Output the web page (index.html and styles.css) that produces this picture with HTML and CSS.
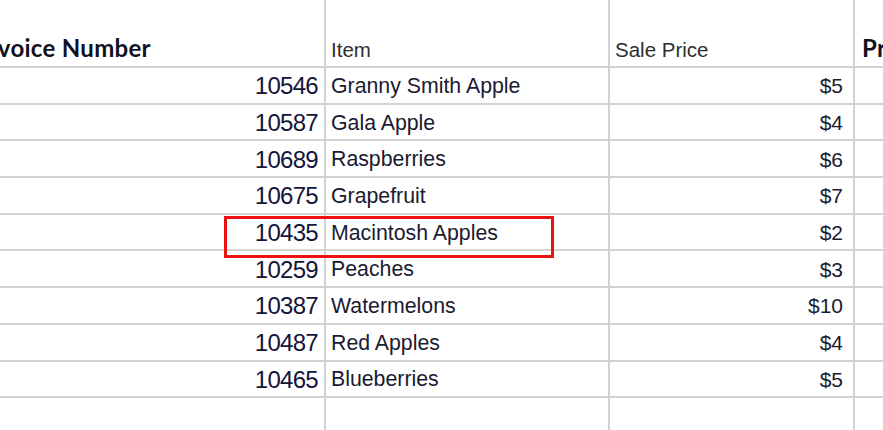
FILE: index.html
```html
<!DOCTYPE html>
<html>
<head>
<meta charset="utf-8">
<link rel="stylesheet" href="styles.css">
</head>
<body>
<div class="sheet">
  <div class="grid">
    <div class="cell head h-num"><span class="bold-head">Invoice Number</span></div>
    <div class="cell head h-text">Item</div>
    <div class="cell head h-text">Sale Price</div>
    <div class="cell head h-last"><span class="bold-head">Profit</span></div>

    <div class="cell num">10546</div><div class="cell txt">Granny Smith Apple</div><div class="cell price">$5</div><div class="cell last"></div>
    <div class="cell num">10587</div><div class="cell txt">Gala Apple</div><div class="cell price">$4</div><div class="cell last"></div>
    <div class="cell num">10689</div><div class="cell txt">Raspberries</div><div class="cell price">$6</div><div class="cell last"></div>
    <div class="cell num">10675</div><div class="cell txt">Grapefruit</div><div class="cell price">$7</div><div class="cell last"></div>
    <div class="cell num">10435</div><div class="cell txt">Macintosh Apples</div><div class="cell price">$2</div><div class="cell last"></div>
    <div class="cell num">10259</div><div class="cell txt">Peaches</div><div class="cell price">$3</div><div class="cell last"></div>
    <div class="cell num">10387</div><div class="cell txt">Watermelons</div><div class="cell price">$10</div><div class="cell last"></div>
    <div class="cell num">10487</div><div class="cell txt">Red Apples</div><div class="cell price">$4</div><div class="cell last"></div>
    <div class="cell num">10465</div><div class="cell txt">Blueberries</div><div class="cell price">$5</div><div class="cell last"></div>

    <div class="cell empty"></div><div class="cell empty"></div><div class="cell empty"></div><div class="cell empty last"></div>
  </div>
  <div class="highlight"></div>
</div>
</body>
</html>
```

FILE: styles.css
```css
html, body {
  margin: 0;
  padding: 0;
  background: #ffffff;
}

.sheet {
  position: relative;
  width: 883px;
  height: 430px;
  overflow: hidden;
}

.grid {
  display: grid;
  grid-template-columns: 326px 284px 245px 60px;
  grid-template-rows: 68px repeat(9, 36.7px) 40px;
  width: 915px;
}

.cell {
  box-sizing: border-box;
  border-right: 2px solid #d3d3d3;
  border-bottom: 2px solid #d3d3d3;
  display: flex;
  align-items: center;
  white-space: nowrap;
  overflow: hidden;
  color: #16162a;
}

.cell.last {
  border-right: none;
}

.cell.empty {
  border-bottom: none;
}

.head {
  align-items: flex-end;
  padding-bottom: 4px;
}

.bold-head {
  font-family: "Lato", "Liberation Sans", sans-serif;
  font-weight: 700;
  font-size: 24px;
  letter-spacing: 0.3px;
  color: #111122;
}

.h-num .bold-head {
  margin-left: -23px;
}

.h-text {
  font-family: "Liberation Sans", Arial, sans-serif;
  font-size: 20.5px;
  color: #2e2e2e;
  padding-left: 5px;
}

.h-last {
  padding-left: 7px;
  border-right: none;
}

.num {
  justify-content: flex-end;
  padding-right: 6px;
  padding-top: 2px;
  font-family: "Liberation Sans", Arial, sans-serif;
  font-size: 24px;
  letter-spacing: -0.7px;
  color: #14143a;
}

.txt {
  padding-left: 5px;
  padding-top: 2px;
  font-family: "Liberation Sans", Arial, sans-serif;
  font-size: 21.3px;
  color: #1a1a30;
}

.price {
  justify-content: flex-end;
  padding-right: 10px;
  padding-top: 2px;
  font-family: "Liberation Sans", Arial, sans-serif;
  font-size: 21px;
  color: #1a1a30;
}

.highlight {
  position: absolute;
  left: 224px;
  top: 216px;
  width: 330px;
  height: 42px;
  box-sizing: border-box;
  border: 3px solid #ee1111;
}
```
